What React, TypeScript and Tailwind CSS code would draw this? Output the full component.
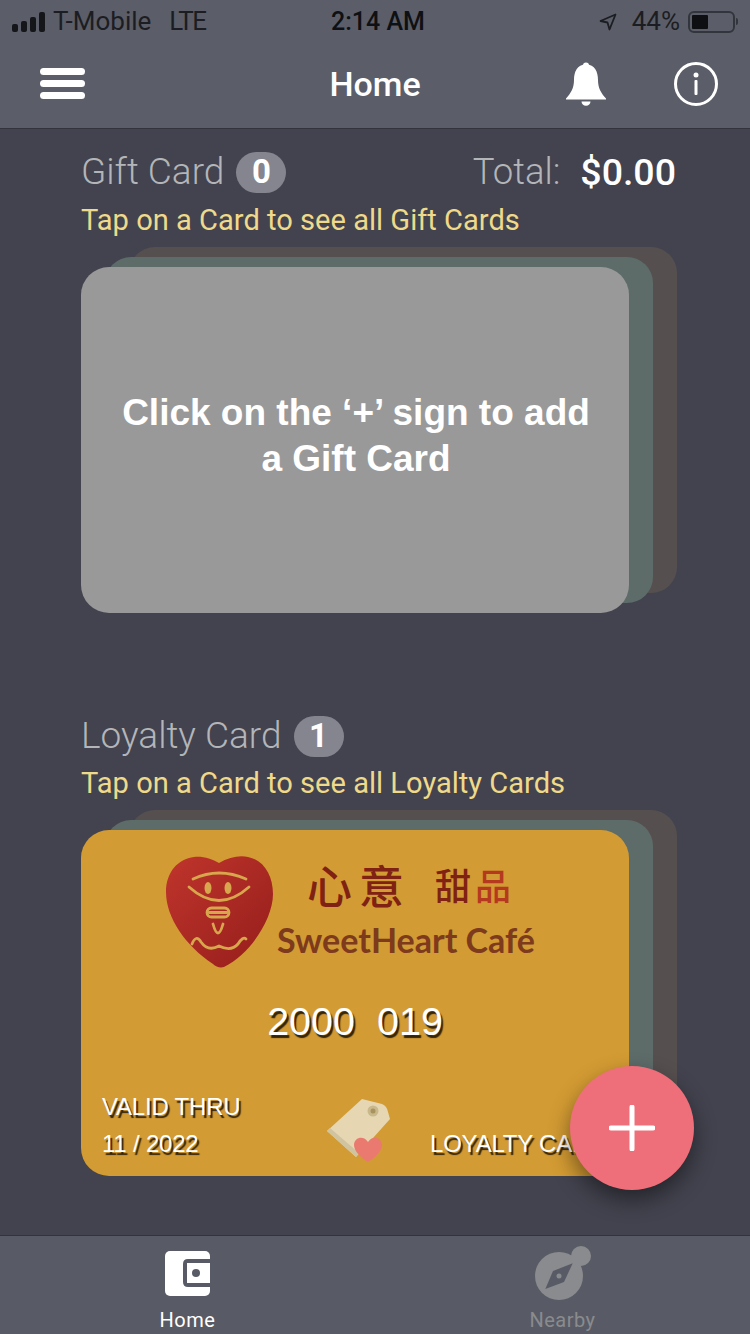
import React from 'react'

const sans = "font-['Roboto',sans-serif]"
const arial = "font-['Liberation_Sans',Arial,sans-serif]"
const embossed = '[text-shadow:2px_3px_1px_#33240c]'

const StatusBar = () => (
  <div className={`h-[40px] pt-[2px] pl-[12px] pr-[12px] grid grid-cols-[1fr_auto_1fr] items-center text-[26px] text-[#1c1d22] ${sans}`}>
    <div className="flex items-center">
      <div className="flex items-end gap-[3px] mr-[8px]">
        <div className="w-[6px] h-[8px] rounded-[2px] bg-[#15161a]" />
        <div className="w-[6px] h-[11px] rounded-[2px] bg-[#15161a]" />
        <div className="w-[6px] h-[15px] rounded-[2px] bg-[#15161a]" />
        <div className="w-[6px] h-[20px] rounded-[2px] bg-[#15161a]" />
      </div>
      <span>T-Mobile</span>
      <span className="ml-[18px] tracking-[-1.500px]">LTE</span>
    </div>
    <div className="ml-[6px] text-center font-medium text-[25px] text-[#0f1013]">2:14 AM</div>
    <div className="flex items-center justify-end">
      <svg width="18" height="18" viewBox="0 0 18 18" className="mr-[15px]">
        <path d="M16.500 1.500 L1.500 8 L8.500 9.500 L10.500 16.500 Z" fill="none" stroke="#1c1d22" strokeWidth="1.800" strokeLinejoin="round" />
      </svg>
      <span>44%</span>
      <div className="ml-[8px] w-[47px] h-[22px] rounded-[6px] border-2 border-[#33353c] p-[2px]">
        <div className="w-[16px] h-full rounded-[1px] bg-[#0e0f12]" />
      </div>
      <div className="ml-[1px] w-[2px] h-[7px] rounded-r-[2px] bg-[#33353c]" />
    </div>
  </div>
)

const NavBar = () => (
  <div className="h-[89px] pl-[40px] pr-[32px] grid grid-cols-[1fr_auto_1fr] items-center border-b border-[#33343b]">
    <div className="flex flex-col gap-[5px] w-[45px] -mt-[2px]">
      <div className="h-[7px] rounded-full bg-white" />
      <div className="h-[7px] rounded-full bg-white" />
      <div className="h-[7px] rounded-full bg-white" />
    </div>
    <div className={`text-[34px] font-medium text-white mr-[8px] ${sans}`}>Home</div>
    <div className="flex items-center justify-end gap-[68px]">
      <svg width="40" height="44" viewBox="0 0 40 44" fill="white">
        <circle cx="20" cy="3.5" r="3" />
        <path d="M20 2.5 C29 2.500 32 10 32 18 C32 26 35 31 40 36.500 L40 37.500 L0 37.500 L0 36.500 C5 31 8 26 8 18 C8 10 11 2.500 20 2.500 Z" />
        <path d="M15.500 39.500 L24.500 39.500 C24.500 42 22.500 43.800 20 43.800 C17.500 43.800 15.500 42 15.500 39.500 Z" />
      </svg>
      <svg width="44" height="44" viewBox="0 0 44 44" fill="none">
        <circle cx="22" cy="22" r="20.500" stroke="white" strokeWidth="3" />
        <circle cx="22" cy="13" r="2.500" fill="white" />
        <rect x="20.500" y="18" width="3" height="15" rx="1" fill="white" />
      </svg>
    </div>
  </div>
)

const SectionTitle = ({ title, count }: { title: string; count: number }) => (
  <div className="flex items-center gap-[12px]">
    <span className="text-[37px] text-[#b4b5b9] font-light">{title}</span>
    <span className="w-[50px] h-[41px] rounded-full bg-[#84858e] flex items-center justify-center text-[33px] font-bold text-white">
      {count}
    </span>
  </div>
)

const CardStack = ({ children, className }: { children: React.ReactNode; className: string }) => (
  <div className="relative w-[548px] h-[346px] mt-[29px]">
    <div className="absolute left-[48px] -top-[20px] w-full h-full rounded-[26px] bg-[#55504f]" />
    <div className="absolute left-[24px] -top-[10px] w-full h-full rounded-[26px] bg-[#5d6b69]" />
    <div className={`relative w-full h-full rounded-[28px] overflow-hidden ${className}`}>{children}</div>
  </div>
)

const HeartLogo = () => (
  <svg width="110" height="113" viewBox="0 0 110 113" className="shrink-0">
    <defs>
      <linearGradient id="heartFill" x1="0" y1="0" x2="1" y2="1">
        <stop offset="0" stopColor="#bf352c" />
        <stop offset="1" stopColor="#951d1b" />
      </linearGradient>
    </defs>
    <path
      d="M53 7 C63 1 74 -1 82 1 C98 4 107 20 107 38 C107 62 85 98 58 111 C54 112 50 111 47 108 C20 90 0 62 0 36 C0 16 12 3 28 1 C37 0 46 3 53 7 Z"
      fill="url(#heartFill)"
    />
    <g fill="none" stroke="#d8a64c" strokeWidth="2.800" strokeLinecap="round">
      <path d="M27 23 Q53 11 80 23" />
      <path d="M23 31 Q53 58 83 31" />
      <rect x="41" y="52" width="22" height="9" rx="4.500" />
      <path d="M43 56.500 L61 56.500" />
      <path d="M47 68 Q52 86 57 68" />
      <path d="M26 88 Q30 78 35 86 Q42 96 53 90 Q65 96 72 88 Q77 80 80 83" />
    </g>
    <ellipse cx="42" cy="32" rx="3.500" ry="6" fill="#d8a64c" />
    <ellipse cx="62" cy="32" rx="3.500" ry="6" fill="#d8a64c" />
  </svg>
)

const TagIcon = () => (
  <svg width="64" height="66" viewBox="16 10 64 66" className="shrink-0">
    <path d="M17 45 L52 13 L72 18 Q77 20 78 26 L80 33 L46 71 Z" fill="#e6d7b2" />
    <path d="M17 45 L20 42 L49 67 L46 71 Z" fill="#d0c39f" />
    <circle cx="63" cy="25" r="5.500" fill="#c9b88c" />
    <circle cx="63" cy="25" r="2.500" fill="#a8935f" />
    <path d="M57 78 C50 74 43 67 43 61 C43 53 53 51 57 58 C61 51 71 53 71 61 C71 67 64 74 57 78 Z" transform="translate(1 -2)" fill="#ea7a70" />
  </svg>
)

const WalletIcon = () => (
  <svg width="45" height="45" viewBox="0 0 45 45">
    <rect width="45" height="45" rx="5" fill="white" />
    <path d="M45 8 L23 8 Q18 8 18 13 L18 31 Q18 36 23 36 L45 36 L45 32 L22 32 L22 12 L45 12 Z" fill="#585b65" />
    <circle cx="31" cy="22" r="4" fill="#585b65" />
  </svg>
)

const CompassIcon = () => (
  <svg width="56" height="56" viewBox="0 0 56 56">
    <circle cx="24" cy="30" r="24" fill="#8a8b8e" />
    <circle cx="46" cy="10" r="10" fill="#8a8b8e" />
    <path d="M37.700 17.300 L29 36 L10.300 43 L18 25 Z" fill="#585b65" />
    <circle cx="24" cy="30" r="2.500" fill="#8a8b8e" />
  </svg>
)

const LoyaltyCard = () => (
  <div className={`h-full flex flex-col ${arial}`}>
    <div className="flex pl-[85px] pt-[26px]">
      <HeartLogo />
      <div className="-ml-[1px]">
        <div className="flex items-center text-[#7f2113] font-['Noto_Sans_CJK_SC',sans-serif] font-medium pl-[32px] pt-[2px] h-[54px]">
          <span className="text-[45px] leading-none tracking-[7px]">心意</span>
          <span className="ml-[24px] text-[36px] leading-none tracking-[4px]">
            甜<span className="text-[#b5391f]">品</span>
          </span>
        </div>
        <div className="mt-[8px] pl-[2px] text-[34px] leading-[44px] text-[#7d3a1c] font-['Lato',sans-serif] font-bold whitespace-nowrap">
          SweetHeart Café
        </div>
      </div>
    </div>
    <div className={`mt-[29px] text-center text-[39.500px] leading-[46px] text-white ${embossed}`}>
      2000&nbsp;&nbsp;019
    </div>
    <div className={`mt-auto pb-[14px] pl-[21px] flex items-end text-[24px] leading-[37px] tracking-[-0.2px] text-white whitespace-nowrap ${embossed}`}>
      <div className="w-[224px]">
        <div>VALID THRU</div>
        <div>11 / 2022</div>
      </div>
      <TagIcon />
      <div className="ml-[40px]">LOYALTY CARD</div>
    </div>
  </div>
)

const TabItem = ({ label, icon, className }: { label: string; icon: React.ReactNode; className: string }) => (
  <div className="flex flex-col items-center">
    <div className="h-[75px] flex items-center">{icon}</div>
    <div className={`-mt-[3px] text-[20px] leading-[24px] tracking-[0.5px] ${sans} ${className}`}>{label}</div>
  </div>
)

export default function App() {
  return (
    <div className={`relative w-[750px] h-[1334px] flex flex-col overflow-hidden bg-[#42434e] ${sans}`}>
      <div className="bg-[#5b5e68]">
        <StatusBar />
        <NavBar />
      </div>

      <div className="flex-1 pl-[81px] pr-[74px] pt-[21px]">
        <div className="flex items-center justify-between h-[44px]">
          <SectionTitle title="Gift Card" count={0} />
          <div className="flex items-center">
            <span className="text-[36.500px] text-[#b4b5b9] font-light">Total:</span>
            <span className="ml-[20px] text-[37.500px] font-medium text-white">$0.00</span>
          </div>
        </div>
        <div className="mt-[8px] h-[36px] pt-[2px] flex items-center text-[29.100px] text-[#efd98a]">Tap on a Card to see all Gift Cards</div>
        <CardStack className="bg-[#999999] flex items-center justify-center">
          <div className={`text-[37px] leading-[46px] font-bold text-white text-center -mt-[8px] ml-[2px] ${arial}`}>
            Click on the ‘+’ sign to add
            <br />a Gift Card
          </div>
        </CardStack>

        <div className="mt-[101px] h-[44px] flex items-center">
          <SectionTitle title="Loyalty Card" count={1} />
        </div>
        <div className="mt-[7px] h-[36px] pt-[2px] flex items-center text-[29.100px] text-[#efd98a]">Tap on a Card to see all Loyalty Cards</div>
        <CardStack className="bg-[#d39b33]">
          <LoyaltyCard />
        </CardStack>
      </div>

      <div className="h-[99px] grid grid-cols-2 bg-[#585b65] border-t border-[#33343b]">
        <TabItem label="Home" icon={<WalletIcon />} className="text-white" />
        <TabItem label="Nearby" icon={<CompassIcon />} className="text-[#8a8b8e]" />
      </div>

      <button className="absolute left-[570px] top-[1066px] w-[124px] h-[124px] rounded-full bg-[#ee6e7a] shadow-[0_10px_22px_rgba(0,0,0,0.45)] flex items-center justify-center">
        <svg width="46" height="46" viewBox="0 0 46 46">
          <path d="M23 2 L23 44 M2 23 L44 23" stroke="white" strokeWidth="5" strokeLinecap="round" />
        </svg>
      </button>
    </div>
  )
}
